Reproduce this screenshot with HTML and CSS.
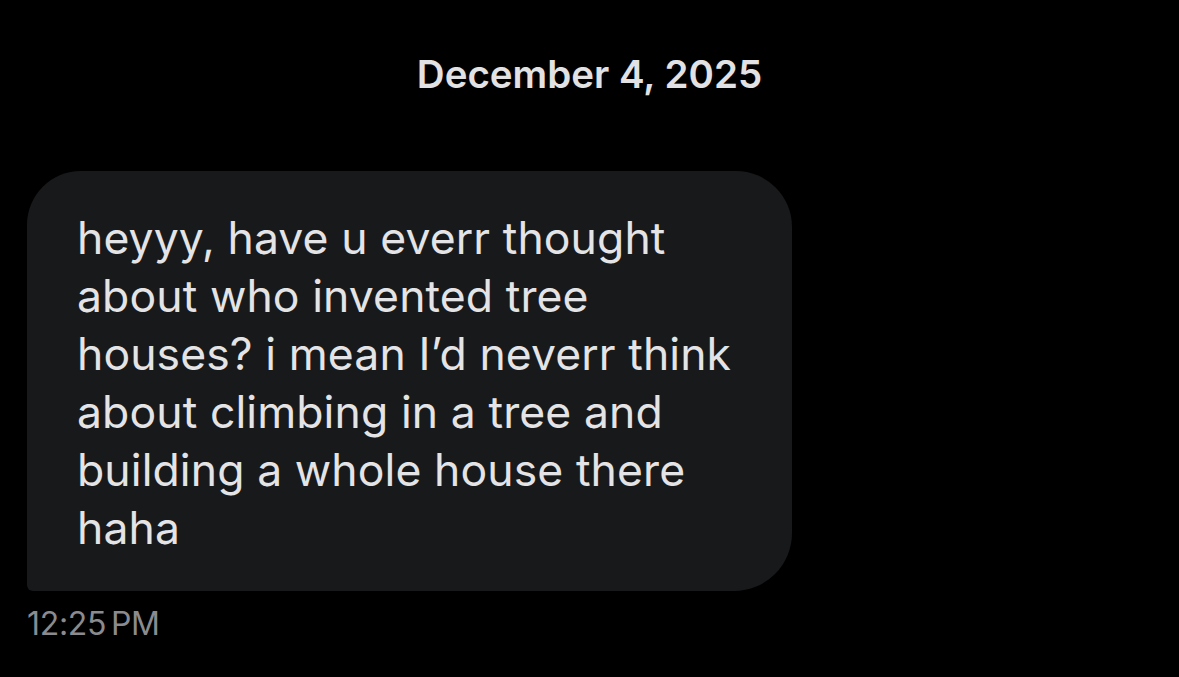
FILE: index.html
```html
<!DOCTYPE html>
<html lang="en">
<head>
    <meta charset="UTF-8">
    <meta name="viewport" content="width=device-width, initial-scale=1.0">
    <title>Messages</title>
    <link rel="stylesheet" href="styles.css">
</head>
<body>
<div class="chat">
    <div class="date">December 4, 2025</div>
    <div class="message">
        <div class="bubble">heyyy, have u everr thought<br>about who invented tree<br>houses? i mean I’d neverr think<br>about climbing in a tree and<br>building a whole house there<br>haha</div>
        <div class="time">12:25 PM</div>
    </div>
</div>
</body>
</html>
```

FILE: styles.css
```css
body{
    margin: 0;
    background-color: #000;
    font-family: "Inter", "Noto Sans", sans-serif;
}
.chat{
    display: flex;
    flex-direction: column;
    padding: 52px 0 0 27px;
}
.date{
    align-self: center;
    margin-left: -27px;
    font-size: 38.5px;
    font-weight: 600;
    line-height: 44px;
    color: #e2e2e4;
}
.message{
    display: flex;
    flex-direction: column;
    margin-top: 75px;
}
.bubble{
    width: 656px;
    padding: 38px 59px 34px 50px;
    background-color: #18191b;
    border-radius: 54px 56px 58px 6px;
    color: #e4e4e6;
    font-size: 44.5px;
    line-height: 58px;
    letter-spacing: 0.1px;
}
.time{
    margin-top: 16px;
    font-size: 32px;
    line-height: 34px;
    color: #8b8b8f;
    letter-spacing: -0.3px;
    word-spacing: -4px;
}
```
